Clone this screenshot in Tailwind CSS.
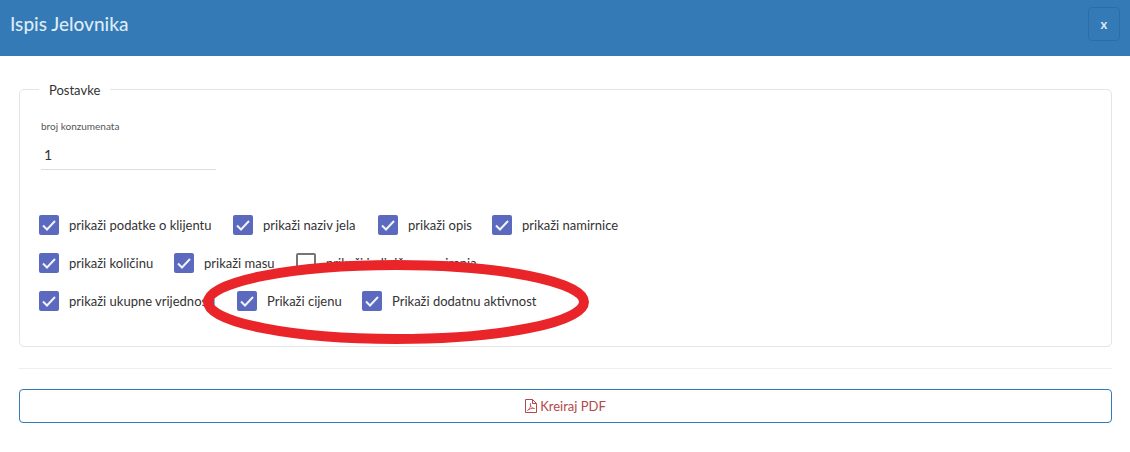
<!DOCTYPE html>
<html lang="hr">
<head>
<meta charset="utf-8">
<title>Ispis Jelovnika</title>
<script src="https://cdn.jsdelivr.net/npm/@tailwindcss/browser@4"></script>
</head>
<body class="bg-white font-['Lato',sans-serif] text-[13px] leading-5 text-[#333333]">
<header class="flex h-14 items-start justify-between bg-[#337ab7] px-[10px] pt-[7px]">
  <h1 class="pt-[5px] text-[19px] leading-6 font-medium text-[#dfeaf4]">Ispis Jelovnika</h1>
  <button type="button" aria-label="Zatvori" class="h-[34px] w-8 rounded border border-[#2e6da4] text-[13px] font-bold text-[#dfeaf4]">x</button>
</header>
<main class="pt-[22px] pr-[18px] pl-[19px]">
  <form>
    <fieldset class="relative min-w-0 rounded-[5px] border border-[#e5e5e5] px-[19px] pb-[35px]">
      <legend class="px-[10px] pt-[2px]">Postavke</legend>
      <div class="ml-[2px] w-[175px] pt-4">
        <label for="broj" class="block text-[10px] leading-5 text-[#555555]">broj konzumenata</label>
        <input id="broj" type="text" value="1" class="mt-1 block h-[30px] w-full border-b border-[#dddddd] px-[3px] text-sm outline-none">
      </div>
      <div class="mt-[45px] flex flex-col gap-[18px] whitespace-nowrap">
        <div class="grid grid-cols-[194px_145px_114px_auto] justify-start">
          <label class="flex gap-[10px]"><span class="grid size-5"><input type="checkbox" checked class="peer col-start-1 row-start-1 size-5 appearance-none rounded-xs border-2 border-[#757575] checked:border-[#5b6abf] checked:bg-[#5b6abf]"><svg class="pointer-events-none col-start-1 row-start-1 hidden size-5 peer-checked:block" viewBox="0 0 20 20" fill="none" stroke="#f1f2fa" stroke-width="2"><path d="M4 10.500l4 4 8-8.500"/></svg></span>prikaži podatke o klijentu</label>
          <label class="flex gap-[10px]"><span class="grid size-5"><input type="checkbox" checked class="peer col-start-1 row-start-1 size-5 appearance-none rounded-xs border-2 border-[#757575] checked:border-[#5b6abf] checked:bg-[#5b6abf]"><svg class="pointer-events-none col-start-1 row-start-1 hidden size-5 peer-checked:block" viewBox="0 0 20 20" fill="none" stroke="#f1f2fa" stroke-width="2"><path d="M4 10.500l4 4 8-8.500"/></svg></span>prikaži naziv jela</label>
          <label class="flex gap-[10px]"><span class="grid size-5"><input type="checkbox" checked class="peer col-start-1 row-start-1 size-5 appearance-none rounded-xs border-2 border-[#757575] checked:border-[#5b6abf] checked:bg-[#5b6abf]"><svg class="pointer-events-none col-start-1 row-start-1 hidden size-5 peer-checked:block" viewBox="0 0 20 20" fill="none" stroke="#f1f2fa" stroke-width="2"><path d="M4 10.500l4 4 8-8.500"/></svg></span>prikaži opis</label>
          <label class="flex gap-[10px]"><span class="grid size-5"><input type="checkbox" checked class="peer col-start-1 row-start-1 size-5 appearance-none rounded-xs border-2 border-[#757575] checked:border-[#5b6abf] checked:bg-[#5b6abf]"><svg class="pointer-events-none col-start-1 row-start-1 hidden size-5 peer-checked:block" viewBox="0 0 20 20" fill="none" stroke="#f1f2fa" stroke-width="2"><path d="M4 10.500l4 4 8-8.500"/></svg></span>prikaži namirnice</label>
        </div>
        <div class="grid grid-cols-[135px_122px_auto] justify-start">
          <label class="flex gap-[10px]"><span class="grid size-5"><input type="checkbox" checked class="peer col-start-1 row-start-1 size-5 appearance-none rounded-xs border-2 border-[#757575] checked:border-[#5b6abf] checked:bg-[#5b6abf]"><svg class="pointer-events-none col-start-1 row-start-1 hidden size-5 peer-checked:block" viewBox="0 0 20 20" fill="none" stroke="#f1f2fa" stroke-width="2"><path d="M4 10.500l4 4 8-8.500"/></svg></span>prikaži količinu</label>
          <label class="flex gap-[10px]"><span class="grid size-5"><input type="checkbox" checked class="peer col-start-1 row-start-1 size-5 appearance-none rounded-xs border-2 border-[#757575] checked:border-[#5b6abf] checked:bg-[#5b6abf]"><svg class="pointer-events-none col-start-1 row-start-1 hidden size-5 peer-checked:block" viewBox="0 0 20 20" fill="none" stroke="#f1f2fa" stroke-width="2"><path d="M4 10.500l4 4 8-8.500"/></svg></span>prikaži masu</label>
          <label class="flex gap-[10px]"><span class="grid size-5"><input type="checkbox" class="peer col-start-1 row-start-1 size-5 appearance-none rounded-xs border-2 border-[#757575] checked:border-[#5b6abf] checked:bg-[#5b6abf]"><svg class="pointer-events-none col-start-1 row-start-1 hidden size-5 peer-checked:block" viewBox="0 0 20 20" fill="none" stroke="#f1f2fa" stroke-width="2"><path d="M4 10.500l4 4 8-8.500"/></svg></span>prikaži jedinične namirenja</label>
        </div>
        <div class="grid grid-cols-[198px_125px_auto] justify-start">
          <label class="flex gap-[10px]"><span class="grid size-5"><input type="checkbox" checked class="peer col-start-1 row-start-1 size-5 appearance-none rounded-xs border-2 border-[#757575] checked:border-[#5b6abf] checked:bg-[#5b6abf]"><svg class="pointer-events-none col-start-1 row-start-1 hidden size-5 peer-checked:block" viewBox="0 0 20 20" fill="none" stroke="#f1f2fa" stroke-width="2"><path d="M4 10.500l4 4 8-8.500"/></svg></span>prikaži ukupne vrijednosti</label>
          <label class="flex gap-[10px]"><span class="grid size-5"><input type="checkbox" checked class="peer col-start-1 row-start-1 size-5 appearance-none rounded-xs border-2 border-[#757575] checked:border-[#5b6abf] checked:bg-[#5b6abf]"><svg class="pointer-events-none col-start-1 row-start-1 hidden size-5 peer-checked:block" viewBox="0 0 20 20" fill="none" stroke="#f1f2fa" stroke-width="2"><path d="M4 10.500l4 4 8-8.500"/></svg></span>Prikaži cijenu</label>
          <label class="flex gap-[10px]"><span class="grid size-5"><input type="checkbox" checked class="peer col-start-1 row-start-1 size-5 appearance-none rounded-xs border-2 border-[#757575] checked:border-[#5b6abf] checked:bg-[#5b6abf]"><svg class="pointer-events-none col-start-1 row-start-1 hidden size-5 peer-checked:block" viewBox="0 0 20 20" fill="none" stroke="#f1f2fa" stroke-width="2"><path d="M4 10.500l4 4 8-8.500"/></svg></span>Prikaži dodatnu aktivnost</label>
        </div>
      </div>
      <svg class="pointer-events-none absolute bottom-[2px] left-[183px] h-[84px] w-[387px]" viewBox="0 0 387 84" fill="none" aria-hidden="true"><ellipse cx="193" cy="42" rx="188" ry="37" stroke="#ea2529" stroke-width="10"/></svg>
    </fieldset>
    <hr class="mt-[21px] border-[#eeeeee]">
    <button type="submit" class="mt-5 flex h-[34px] w-full items-center justify-center gap-[3px] rounded border border-[#337ab7] text-[13px] text-[#b4484a]">
      <svg class="h-[14px] w-3" viewBox="0 0 12 14" fill="none" stroke="currentColor" aria-hidden="true"><path d="M.5.5h7l4 4v9H.5zM7.500.5v4h4"/><path stroke-width=".8" d="M2.500 11.500C4.500 10.500 6 7 5.500 4.500c-.8 2 1 4.700 4 5-2.500-.6-5 .1-7 2z"/></svg>
      Kreiraj PDF
    </button>
  </form>
</main>
</body>
</html>
